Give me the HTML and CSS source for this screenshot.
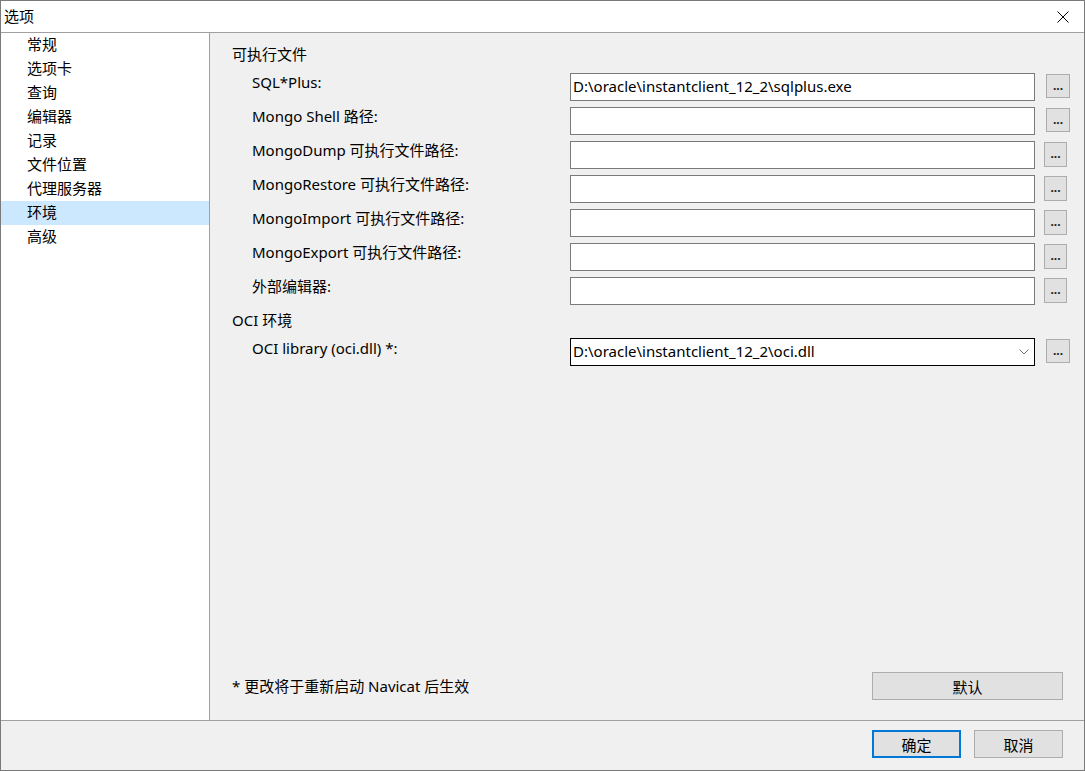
FILE: index.html
```html
<!DOCTYPE html>
<html lang="zh-CN">
<head>
<meta charset="utf-8">
<title>选项</title>
<link rel="stylesheet" href="styles.css">
</head>
<body>
<div class="window">
  <div class="titlebar">
    <span class="title">选项</span>
    <span class="close">
      <svg width="12" height="12" viewBox="0 0 12 12"><path d="M0.5 0.5 L11.5 11.5 M11.5 0.5 L0.5 11.5" stroke="#000" stroke-width="1" fill="none"/></svg>
    </span>
  </div>
  <div class="body">
    <ul class="sidebar">
      <li>常规</li>
      <li>选项卡</li>
      <li>查询</li>
      <li>编辑器</li>
      <li>记录</li>
      <li>文件位置</li>
      <li>代理服务器</li>
      <li class="selected">环境</li>
      <li>高级</li>
    </ul>
    <div class="main">
      <div class="heading">可执行文件</div>
      <div class="grid">
        <div class="label">SQL*Plus:</div>
        <div class="input">D:\oracle\instantclient_12_2\sqlplus.exe</div>
        <div class="dots">...</div>

        <div class="label">Mongo Shell 路径:</div>
        <div class="input"></div>
        <div class="dots">...</div>

        <div class="label">MongoDump 可执行文件路径:</div>
        <div class="input"></div>
        <div class="dots shift">...</div>

        <div class="label">MongoRestore 可执行文件路径:</div>
        <div class="input"></div>
        <div class="dots shift">...</div>

        <div class="label">MongoImport 可执行文件路径:</div>
        <div class="input"></div>
        <div class="dots shift">...</div>

        <div class="label">MongoExport 可执行文件路径:</div>
        <div class="input"></div>
        <div class="dots shift">...</div>

        <div class="label">外部编辑器:</div>
        <div class="input"></div>
        <div class="dots shift">...</div>
      </div>
      <div class="heading second">OCI 环境</div>
      <div class="grid">
        <div class="label oci">OCI library (oci.dll) *:</div>
        <div class="input combo">
          <span>D:\oracle\instantclient_12_2\oci.dll</span>
          <svg class="chev" width="10" height="6" viewBox="0 0 10 6"><path d="M0.5 0.5 L5 5 L9.5 0.5" stroke="#707070" stroke-width="1" fill="none"/></svg>
        </div>
        <div class="dots">...</div>
      </div>
      <div class="spacer"></div>
      <div class="note-row">
        <span class="note">* 更改将于重新启动 Navicat 后生效</span>
        <div class="btn default-btn">默认</div>
      </div>
    </div>
  </div>
  <div class="footer">
    <div class="btn ok">确定</div>
    <div class="btn">取消</div>
  </div>
</div>
</body>
</html>
```

FILE: styles.css
```css
* { box-sizing: border-box; }
html, body { margin: 0; padding: 0; }
body {
  width: 1085px;
  height: 771px;
  background: #f0f0f0;
  font-family: "Noto Sans", "Noto Sans CJK SC", sans-serif;
  font-size: 15px;
  color: #000;
}
.window {
  width: 1085px;
  height: 771px;
  border: 1px solid #7a7a7a;
  display: flex;
  flex-direction: column;
  background: #f0f0f0;
}
.titlebar {
  height: 32px;
  background: #fff;
  border-bottom: 1px solid #a0a0a0;
  display: flex;
  align-items: center;
  justify-content: space-between;
  padding: 0 15px 0 3px;
  flex: none;
}
.title {
  font-family: "Noto Sans CJK SC", sans-serif;
  font-size: 15px;
  line-height: 20px;
  margin-top: -1px;
}
.close { display: flex; margin-top: 1px; }
.body {
  height: 688px;
  display: flex;
  border-bottom: 1px solid #a0a0a0;
  flex: none;
}
.sidebar {
  list-style: none;
  margin: 0;
  padding: 0;
  width: 209px;
  background: #fff;
  border-right: 1px solid #a0a0a0;
  flex: none;
}
.sidebar li {
  height: 24px;
  line-height: 22px;
  padding-left: 26px;
  font-family: "Noto Sans CJK SC", sans-serif;
  font-size: 15px;
}
.sidebar li.selected { background: #cce8ff; }
.main {
  flex: 1;
  display: flex;
  flex-direction: column;
  padding: 11px 14px 20px 22px;
}
.heading {
  line-height: 20px;
  margin-bottom: 9px;
}
.heading.second {
  margin-top: 5px;
  margin-bottom: 8px;
}
.grid {
  display: grid;
  grid-template-columns: 327px 465px 24px;
  column-gap: 11px;
  row-gap: 6px;
}
.label {
  padding-left: 20px;
  line-height: 18px;
  white-space: nowrap;
}
.label.oci { padding-top: 1px; }
.input {
  height: 28px;
  background: #fff;
  border: 1px solid #7a7a7a;
  padding: 0 2px;
  line-height: 25px;
  white-space: nowrap;
  overflow: hidden;
}
.input.combo {
  border-color: #000;
  display: flex;
  align-items: center;
  justify-content: space-between;
  padding-right: 5px;
}
.input.combo span { margin-top: -1px; }
.chev { flex: none; }
.dots {
  width: 24px;
  height: 24px;
  margin-top: 1px;
  background: #e1e1e1;
  border: 1px solid #adadad;
  font-size: 12px;
  line-height: 22px;
  text-align: center;
  font-weight: bold;
  color: #1a1a1a;
}
.dots.shift { margin-left: -2px; width: 23px; height: 25px; }
.spacer { flex: 1; }
.note-row {
  display: flex;
  justify-content: space-between;
  align-items: center;
}
.note { margin-top: -2px; }
.btn {
  width: 89px;
  height: 28px;
  background: #e1e1e1;
  border: 1px solid #adadad;
  font-family: "Noto Sans CJK SC", sans-serif;
  font-size: 15px;
  display: flex;
  align-items: center;
  justify-content: center;
}
.default-btn { width: 191px; margin-right: 7px; }
.footer {
  flex: 1;
  display: flex;
  justify-content: flex-end;
  gap: 13px;
  padding: 9px 21px 0 0;
}
.btn.ok { border: 2px solid #0078d7; }
```
